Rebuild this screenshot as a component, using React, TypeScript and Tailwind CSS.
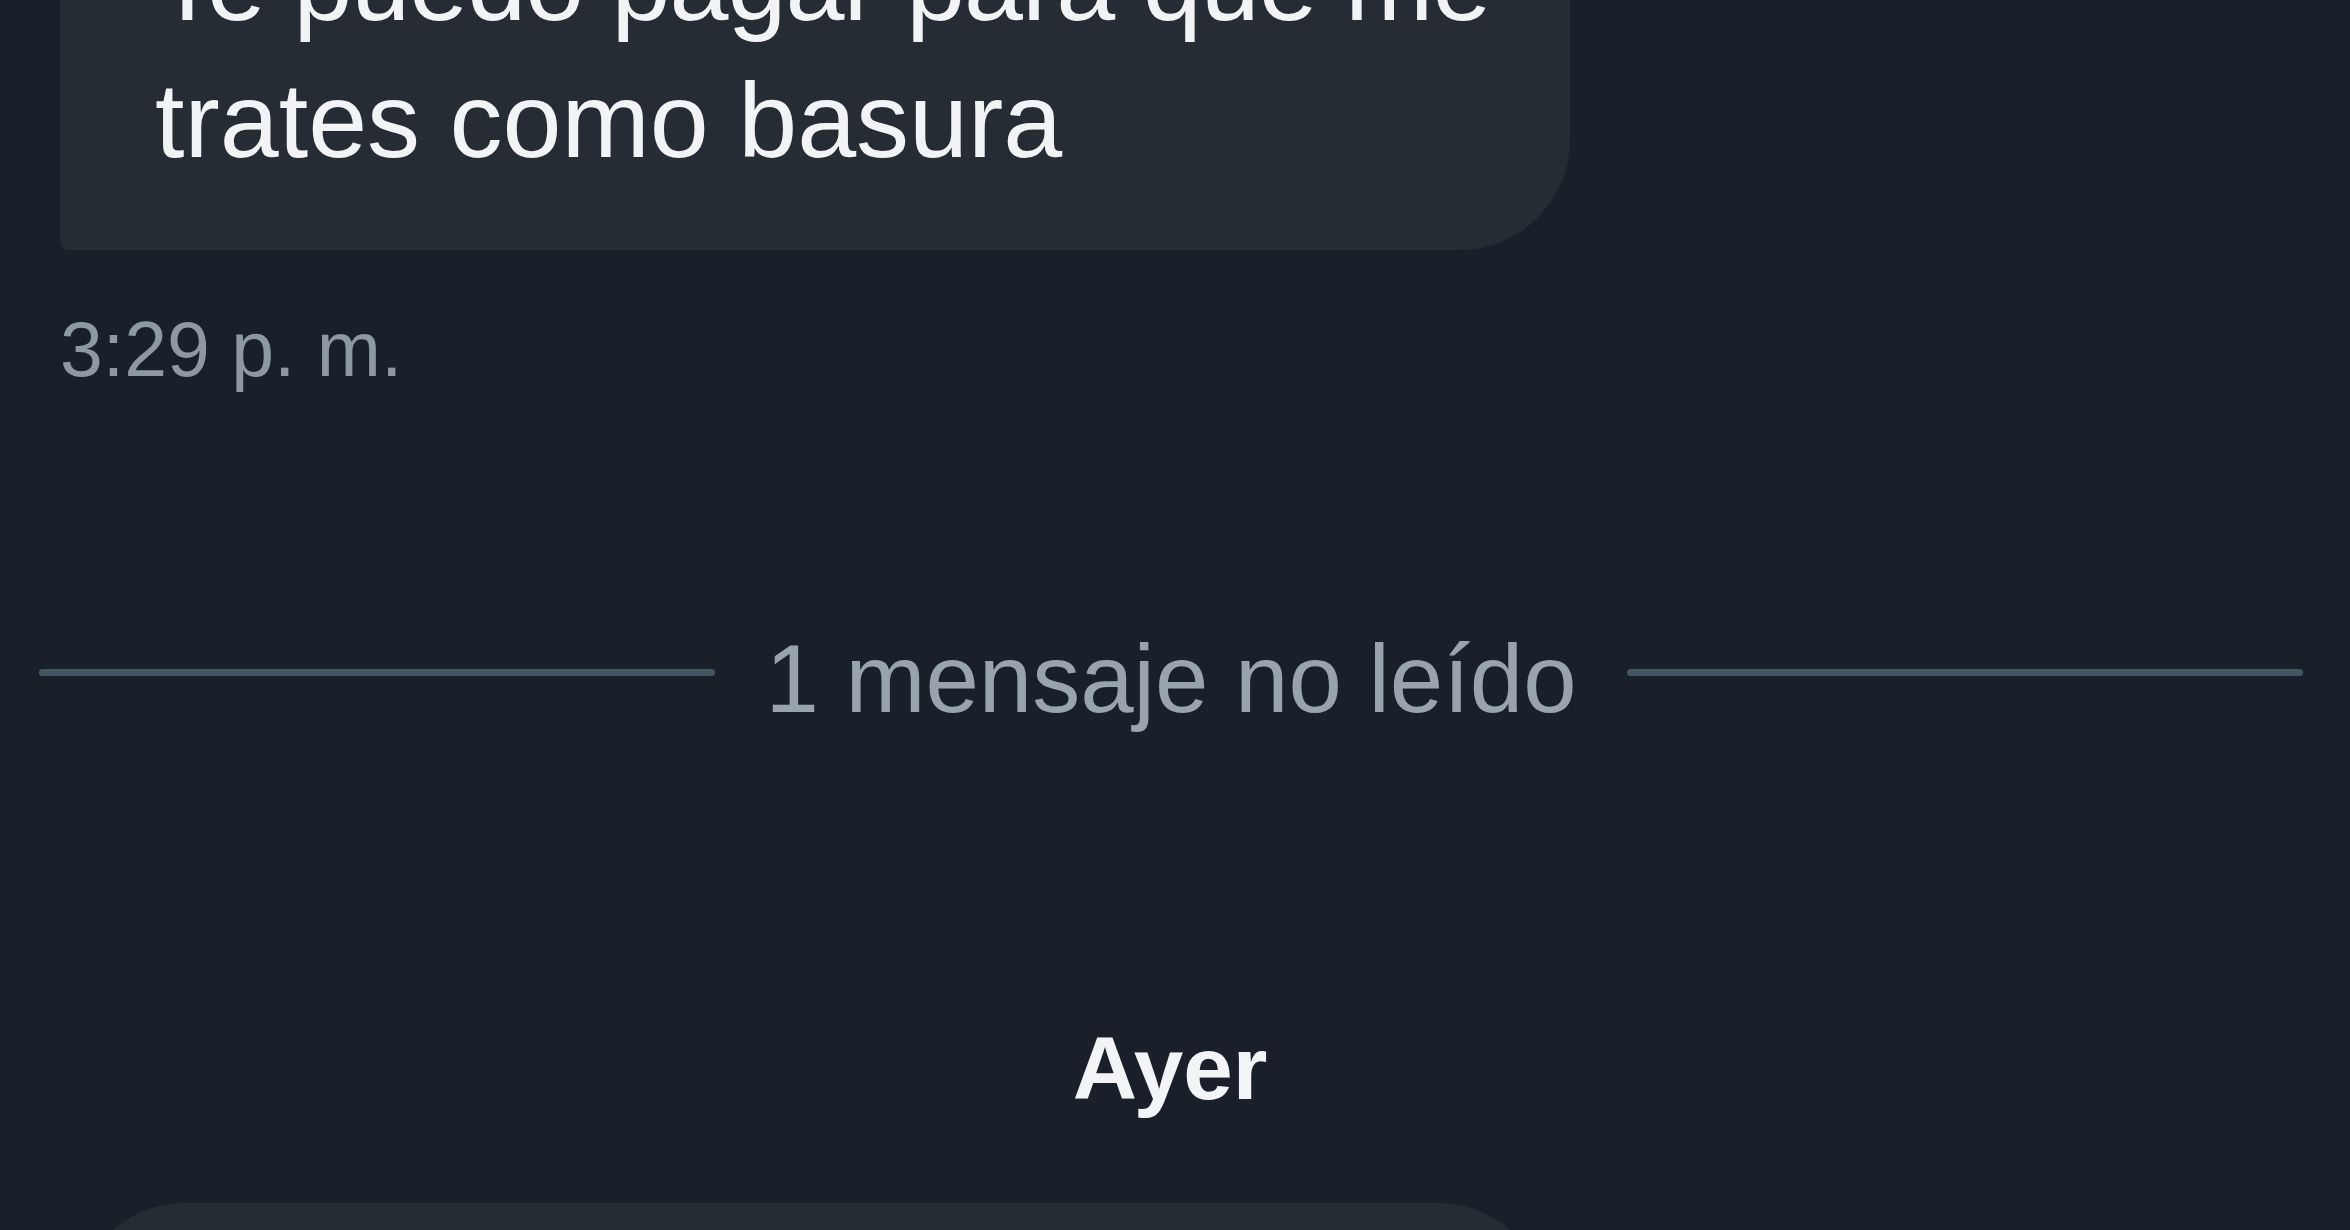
export default function App() {
  return (
    <div
      className="w-full h-[1230px] overflow-hidden bg-[#19202a] text-white"
      style={{ fontFamily: '"Liberation Sans", Arial, sans-serif' }}
    >
      <div className="-mt-[145px] ml-[60px] w-[1510px] bg-[#252c34] rounded-tl-[110px] rounded-tr-[110px] rounded-br-[110px] rounded-bl-[8px] pt-[60px] pb-[61px] pl-[95px] pr-[30px]">
        <p className="text-[106px] leading-[137px] text-[#f1f3f5] whitespace-nowrap tracking-[-1px]">
          Te puedo pagar para que me
          <br />
          <span className="tracking-normal">trates como basura</span>
        </p>
      </div>

      <div className="mt-[55px] ml-[60px] text-[77px] leading-[89px] text-[#8d98a3]">
        3:29 p. m.
      </div>

      <div className="mt-[227px] flex items-center gap-[50px] pl-[39px] pr-[47px]">
        <div className="flex-1 h-[7px] mb-[12px] bg-[#475663] rounded-full" />
        <span className="text-[96px] leading-[115px] text-[#98a3ad] whitespace-nowrap">
          1 mensaje no leído
        </span>
        <div className="flex-1 h-[7px] mb-[12px] bg-[#475663] rounded-full" />
      </div>

      <div className="mt-[279px] flex justify-center pr-[10px]">
        <span className="text-[89px] leading-[107px] font-bold text-[#f3f4f6]">Ayer</span>
      </div>

      <div className="mt-[81px] ml-[75px] w-[1473px] h-[300px] bg-[#252c34] rounded-[110px]" />
    </div>
  );
}
